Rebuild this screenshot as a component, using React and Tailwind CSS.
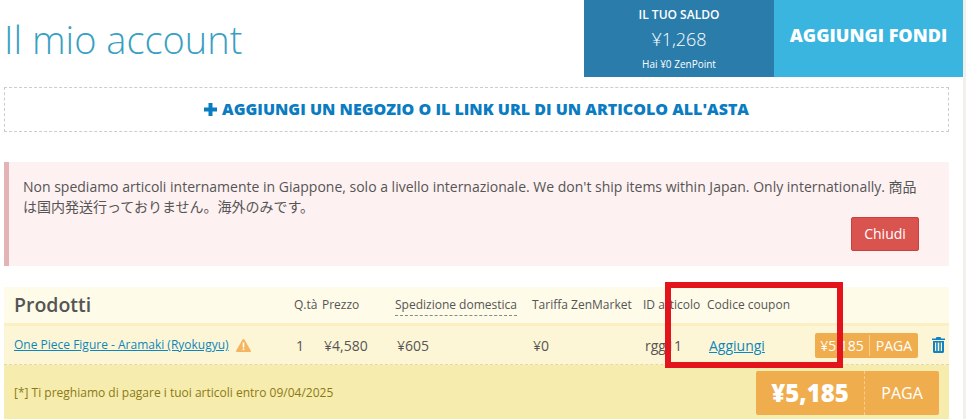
import React from "react";

function Trash() {
  return (
    <svg width="13" height="16" viewBox="0 0 13 16" className="block">
      <path fill="#0f83c4" d="M4.500 0h4l.7 1.600H13V3H0V1.600h3.800L4.500 0zM1 4h11v10.500c0 .9-.6 1.500-1.400 1.500H2.400C1.600 16 1 15.400 1 14.500V4zm2 1.500V14h1.200V5.500H3zm2.700 0V14h1.600V5.500H5.700zm3.100 0V14H10V5.500H8.800z" />
    </svg>
  );
}

function Warn() {
  return (
    <svg width="15" height="13" viewBox="0 0 15 13" className="block">
      <path fill="#f5b55f" d="M7.500 0c.4 0 .7.200.9.500l6.400 10.900c.4.700-.1 1.600-.9 1.600H1.100c-.8 0-1.300-.9-.9-1.600L6.600.5c.2-.3.500-.5.900-.5z" />
      <rect x="6.700" y="3.500" width="1.600" height="5" fill="#fff" />
      <rect x="6.700" y="9.500" width="1.600" height="1.700" fill="#fff" />
    </svg>
  );
}

function Plus() {
  return (
    <svg width="13" height="13" viewBox="0 0 13 13" className="mr-[5px] block">
      <path fill="#0a7cc1" d="M4.500 0h4v4.500H13v4H8.500V13h-4V8.500H0v-4h4.500z" />
    </svg>
  );
}

export default function App() {
  return (
    <div className="relative h-[419px] w-[966px] overflow-hidden bg-white font-['Open_Sans','Noto_Sans_CJK_JP',sans-serif] text-[#555]">
      <header className="flex h-[77px] items-start pl-[4px]">
        <h1 className="mt-[14px] flex-1 text-[38px] leading-[50px] font-light text-[#3a9fc4]">Il mio account</h1>
        <div className="mr-[3px] flex h-[77px] text-white">
          <div className="flex w-[190px] flex-col items-center bg-[#2a7dab] pt-[6px]">
            <div className="text-[12px] leading-[17px] font-semibold">IL TUO SALDO</div>
            <div className="mt-[4px] text-[18px] leading-[24px] font-light">¥1,268</div>
            <div className="mt-[6px] text-[10px] leading-[14px]">Hai ¥0 ZenPoint</div>
          </div>
          <div className="flex w-[189px] items-start justify-center bg-[#3ab5e0] pt-[23px] text-[18px] leading-[24px] font-extrabold">AGGIUNGI FONDI</div>
        </div>
      </header>

      <div className="mt-[10px] ml-[4px] flex h-[45px] w-[945px] items-center justify-center border border-dashed border-[#ccc] pb-[1px] text-[16px] font-extrabold text-[#0a7cc1]">
        <Plus />AGGIUNGI UN NEGOZIO O IL LINK URL DI UN ARTICOLO ALL'ASTA
      </div>

      <div className="mt-[30px] ml-[4px] h-[104px] w-[945px] border-l-[5px] border-[#e2b4b6] bg-[#fef1f1] pt-[15px] pr-[30px] pl-[14px] text-[14px] leading-[20px]">
        <p>Non spediamo articoli internamente in Giappone, solo a livello internazionale. We don't ship items within Japan. Only internationally. 商品は国内発送行っておりません。海外のみです。</p>
        <div className="flex justify-end">
          <button className="h-[34px] w-[68px] rounded-[2px] border border-[#c9403c] bg-[#d9534f] text-[14px] text-white">Chiudi</button>
        </div>
      </div>

      <section className="mt-[21px] ml-[4px] w-[945px]">
        <div className="grid h-[36px] grid-cols-[280px_28px_73px_137px_111px_64px_1fr] items-center whitespace-nowrap bg-[#fefbe9] text-[12px] text-[#555]">
          <div className="pl-[10px] text-[19.500px] font-semibold">Prodotti</div>
          <div className="pl-[10px]">Q.tà</div>
          <div className="pl-[10px]">Prezzo</div>
          <div className="pl-[10px]"><span className="border-b border-dashed border-[#888] pb-[2px]">Spedizione domestica</span></div>
          <div className="pl-[10px]">Tariffa ZenMarket</div>
          <div className="pl-[10px]">ID articolo</div>
          <div className="pl-[10px]">Codice coupon</div>
        </div>
        <div className="grid h-[42px] grid-cols-[280px_28px_73px_137px_111px_64px_118px_1fr] items-center border-t-[3px] border-b border-t-[#fbefc4] border-b-[#e4d9a5] bg-[#fdf6d6] [border-bottom-style:dashed] text-[14px]">
          <div className="flex items-center pl-[10px]">
            <a className="text-[12px] text-[#0f86bb] underline">One Piece Figure - Aramaki (Ryokugyu)</a>
            <span className="ml-[7px]"><Warn /></span>
          </div>
          <div className="pl-[12px]">1</div>
          <div className="pl-[12px]">¥4,580</div>
          <div className="pl-[12px]">¥605</div>
          <div className="pl-[11px]">¥0</div>
          <div className="pl-[12px]">rgg11</div>
          <div className="pl-[12px]"><a className="text-[#0f86bb] underline">Aggiungi</a></div>
          <div className="flex items-center">
            <div className="flex h-[25px] w-[103px] items-center rounded-[2px] bg-[#f0ad4e] text-[14px] text-white">
              <span className="w-[55px] border-r border-[#f7cf95] text-center leading-[21px]">¥5,185</span>
              <span className="flex-1 text-center">PAGA</span>
            </div>
            <span className="ml-[14px]"><Trash /></span>
          </div>
        </div>
        <div className="flex h-[55px] items-center justify-between bg-[#f6ecad] pr-[10px] pl-[10px] text-[12px] text-[#8a7a17]">
          <span>[*] Ti preghiamo di pagare i tuoi articoli entro 09/04/2025</span>
          <div className="flex h-[44px] w-[183px] items-center rounded-[2px] bg-[#f0ad4e] text-white">
            <span className="w-[109px] border-r border-dashed border-[#f7cf95] text-center text-[24px] leading-[44px] font-extrabold">¥5,185</span>
            <span className="flex-1 text-center text-[16px]">PAGA</span>
          </div>
        </div>
      </section>

      <div className="absolute top-[282px] left-[665px] h-[86px] w-[178px] border-[6px] border-[#e3141c]" />
      <div className="absolute top-0 right-0 h-full w-[3px] bg-[#f1f0ea]" />
    </div>
  );
}
